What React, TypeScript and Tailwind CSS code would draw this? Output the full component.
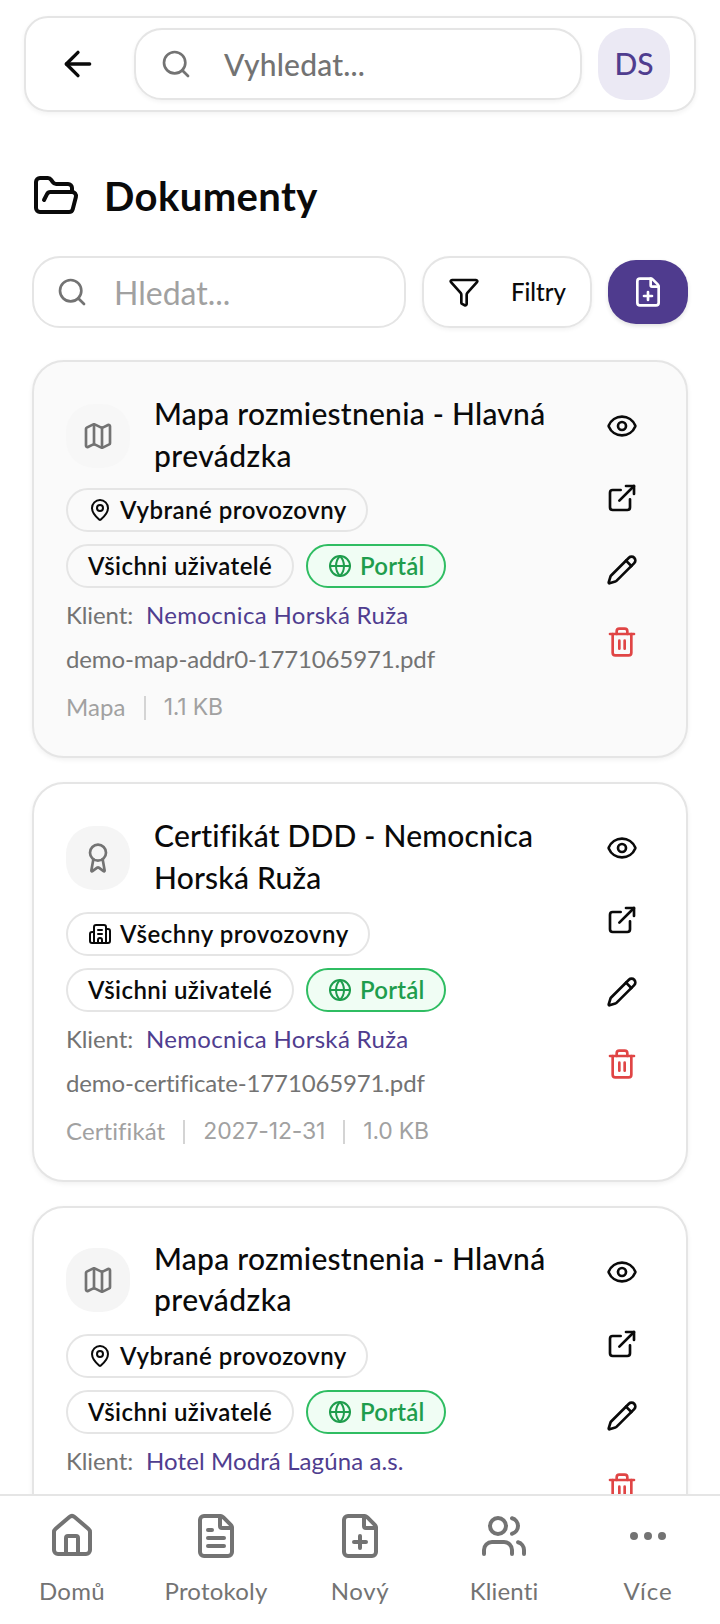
import type { ReactNode } from "react";
import clsx from "clsx";
import {
  ArrowLeft,
  Award,
  Building2,
  Ellipsis,
  ExternalLink,
  Eye,
  FilePlus,
  FileText,
  FolderOpen,
  Funnel,
  Globe,
  House,
  Map,
  MapPin,
  Pencil,
  Search,
  Trash2,
  Users,
  type LucideIcon,
} from "lucide-react";

interface DocumentItem {
  id: number;
  icon: LucideIcon;
  /** Title lines with their tracking. */
  title: { text: string; className: string }[];
  scope: { icon: LucideIcon; label: string; className: string };
  client: string;
  clientClass: string;
  file?: string;
  type?: string;
  expires?: string;
  size?: string;
  highlighted?: boolean;
  cardClass: string;
  headClass: string;
  iconClass: string;
}

const DOCUMENTS: DocumentItem[] = [
  {
    id: 1,
    icon: Map,
    title: [
      { text: "Mapa rozmiestnenia - Hlavná", className: "tracking-[0.25px]" },
      { text: "prevádzka", className: "tracking-[0.45px]" },
    ],
    scope: { icon: MapPin, label: "Vybrané provozovny", className: "w-[302px] tracking-[0.48px]" },
    client: "Nemocnica Horská Ruža",
    clientClass: "tracking-[0.33px]",
    file: "demo-map-addr0-1771065971.pdf",
    type: "Mapa",
    size: "1.1 KB",
    highlighted: true,
    cardClass: "h-[398px]",
    headClass: "h-24 leading-[42px]",
    iconClass: "mt-3",
  },
  {
    id: 2,
    icon: Award,
    title: [
      { text: "Certifikát DDD - Nemocnica", className: "tracking-[0.2px]" },
      { text: "Horská Ruža", className: "tracking-[0.2px]" },
    ],
    scope: { icon: Building2, label: "Všechny provozovny", className: "w-[304px] tracking-[0.58px]" },
    client: "Nemocnica Horská Ruža",
    clientClass: "tracking-[0.33px]",
    file: "demo-certificate-1771065971.pdf",
    type: "Certifikát",
    expires: "2027-12-31",
    size: "1.0 KB",
    cardClass: "h-[400px]",
    headClass: "h-[98px] leading-[42px]",
    iconClass: "mt-3",
  },
  {
    id: 3,
    icon: Map,
    title: [
      { text: "Mapa rozmiestnenia - Hlavná", className: "tracking-[0.25px]" },
      { text: "prevádzka", className: "tracking-[0.45px]" },
    ],
    scope: { icon: MapPin, label: "Vybrané provozovny", className: "w-[302px] tracking-[0.48px]" },
    client: "Hotel Modrá Lagúna a.s.",
    clientClass: "tracking-[0.1px]",
    cardClass: "h-[398px]",
    headClass: "h-24 leading-[41px]",
    iconClass: "mt-[10px]",
  },
];

const NAV_ITEMS: { icon: LucideIcon; label: string; className: string }[] = [
  { icon: House, label: "Domů", className: "tracking-[0.3px]" },
  { icon: FileText, label: "Protokoly", className: "tracking-[0.2px]" },
  { icon: FilePlus, label: "Nový", className: "tracking-[0.6px]" },
  { icon: Users, label: "Klienti", className: "tracking-[0.15px]" },
  { icon: Ellipsis, label: "Více", className: "tracking-[0.9px]" },
];

function Badge({ className, children }: { className?: string; children: ReactNode }) {
  return (
    <span
      className={clsx(
        "flex h-11 shrink-0 items-center gap-2 rounded-full border-2 pl-5 text-2xl font-semibold whitespace-nowrap",
        className,
      )}
    >
      {children}
    </span>
  );
}

function IconButton({ icon: Icon, label, danger }: { icon: LucideIcon; label: string; danger?: boolean }) {
  return (
    <button
      type="button"
      aria-label={label}
      className={clsx("flex size-16 items-center justify-center", danger ? "text-[#e04545]" : "text-neutral-950")}
    >
      <Icon size={32} />
    </button>
  );
}

function MetaDivider() {
  return <span className="mx-[18px] mt-0.5 h-6 w-0.5 bg-neutral-300" aria-hidden="true" />;
}

function DocumentCard({ doc }: { doc: DocumentItem }) {
  const Icon = doc.icon;
  const ScopeIcon = doc.scope.icon;

  return (
    <article
      className={clsx(
        "flex shrink-0 justify-between rounded-[32px] border-2 border-[#e5e5e5] px-8 pt-[30px] shadow-[0_2px_5px_rgba(0,0,0,0.06)]",
        doc.highlighted ? "bg-[#fafafa]" : "bg-white",
        doc.cardClass,
      )}
    >
      <div className="min-w-0">
        <div className={clsx("flex gap-6", doc.headClass)}>
          <div
            className={clsx(
              "flex size-16 shrink-0 items-center justify-center rounded-[28px] text-neutral-500",
              doc.highlighted ? "bg-[#f7f7f7]" : "bg-[#f5f5f5]",
              doc.iconClass,
            )}
          >
            <Icon size={32} />
          </div>
          <h2 className="text-[30px] font-medium whitespace-nowrap [line-height:inherit]">
            {doc.title.map((line) => (
              <span key={line.text} className={clsx("block", line.className)}>
                {line.text}
              </span>
            ))}
          </h2>
        </div>

        <div className="flex flex-col gap-3">
          <div className="flex">
            <Badge className={clsx("border-[#e5e5e5]", doc.scope.className)}>
              <ScopeIcon size={24} />
              <span>{doc.scope.label}</span>
            </Badge>
          </div>
          <div className="flex gap-3">
            <Badge className="w-[228px] border-[#e5e5e5] tracking-[0.42px]">Všichni uživatelé</Badge>
            <Badge className="w-[140px] border-[#2fbd62] bg-green-50 tracking-[0.2px] text-[#1f9d4d]">
              <Globe size={24} />
              <span>Portál</span>
            </Badge>
          </div>
        </div>

        <p className="mt-[9px] flex gap-[13px] text-2xl leading-9 whitespace-nowrap text-neutral-500">
          <span className="w-[67px] tracking-[-0.1px]">Klient:</span>
          <a href="#klient" className={clsx("text-[#4f3d8f]", doc.clientClass)}>
            {doc.client}
          </a>
        </p>
        {doc.file && (
          <p className="mt-2 text-2xl leading-9 tracking-[-0.14px] whitespace-nowrap text-neutral-500">{doc.file}</p>
        )}
        {doc.type && (
          <div className="mt-3 flex h-9 items-center text-2xl leading-9 text-[#a1a1a1]">
            <span className="tracking-[0.1px]">{doc.type}</span>
            {doc.expires && (
              <>
                <MetaDivider />
                <span className="font-[Inter,sans-serif] text-[23px] leading-9 tracking-[-0.15px]">{doc.expires}</span>
              </>
            )}
            <MetaDivider />
            <span className="font-[Inter,sans-serif] text-[23px] leading-9 tracking-[-0.2px]">{doc.size}</span>
          </div>
        )}
      </div>

      <div className="mt-0.5 flex shrink-0 flex-col gap-2">
        <IconButton icon={Eye} label="Zobrazit" />
        <IconButton icon={ExternalLink} label="Otevřít" />
        <IconButton icon={Pencil} label="Upravit" />
        <IconButton icon={Trash2} label="Smazat" danger />
      </div>
    </article>
  );
}

export default function App() {
  return (
    <div className="flex h-[1624px] w-[720px] flex-col overflow-hidden bg-white font-[Lato,'Noto_Sans',sans-serif] text-neutral-950">
      <header className="mx-6 mt-4 flex h-24 shrink-0 items-center rounded-3xl border-2 border-[#e5e5e5] pl-8 shadow-[0_2px_5px_rgba(0,0,0,0.05)]">
        <ArrowLeft size={40} />
        <div className="ml-9 flex h-[72px] w-[448px] items-center gap-8 rounded-[28px] border-2 border-[#e5e5e5] pl-6 text-neutral-500 shadow-[0_2px_4px_rgba(0,0,0,0.05)]">
          <Search size={32} />
          <span className="pb-px text-[30px] leading-9 font-medium tracking-[0.2px]">Vyhledat...</span>
        </div>
        <div className="ml-4 flex size-[72px] items-center justify-center rounded-[28px] bg-[#ebe9f4] pb-px text-[30px] font-medium text-[#4f3d8f]">
          DS
        </div>
      </header>

      <main className="flex min-h-0 flex-1 flex-col overflow-hidden px-8 pt-[60px]">
        <div className="flex h-12 shrink-0 items-center gap-6">
          <FolderOpen size={48} />
          <h1 className="pb-px text-[40px] leading-none font-bold tracking-[0.4px]">Dokumenty</h1>
        </div>

        <div className="mt-9 flex h-[72px] shrink-0 items-center gap-4">
          <div className="flex h-[72px] w-[374px] items-center gap-[26px] rounded-[28px] border-2 border-[#e5e5e5] pl-[22px] text-neutral-500">
            <Search size={32} />
            <span className="pt-0.5 text-[32px] leading-10 text-[#a1a1a1]">Hledat...</span>
          </div>
          <button
            type="button"
            className="flex h-[72px] w-[170px] items-center gap-[31px] rounded-[28px] border-2 border-[#e5e5e5] pl-6 shadow-[0_2px_4px_rgba(0,0,0,0.05)]"
          >
            <Funnel size={32} />
            <span className="text-2xl font-medium">Filtry</span>
          </button>
          <button
            type="button"
            aria-label="Nový dokument"
            className="flex h-16 w-20 items-center justify-center rounded-[28px] bg-[#4f3b8e] text-white shadow-[0_2px_4px_rgba(0,0,0,0.12)]"
          >
            <FilePlus size={32} />
          </button>
        </div>

        <div className="mt-8 flex flex-col gap-6">
          {DOCUMENTS.map((doc) => (
            <DocumentCard key={doc.id} doc={doc} />
          ))}
        </div>
      </main>

      <nav className="grid h-[130px] shrink-0 grid-cols-5 border-t-2 border-[#e5e5e5] bg-white pt-4 text-neutral-500">
        {NAV_ITEMS.map(({ icon: Icon, label, className }) => (
          <a key={label} href="#nav" className="flex flex-col items-center gap-[13px]">
            <Icon size={48} />
            <span className={clsx("text-2xl leading-9", className)}>{label}</span>
          </a>
        ))}
      </nav>
    </div>
  );
}
